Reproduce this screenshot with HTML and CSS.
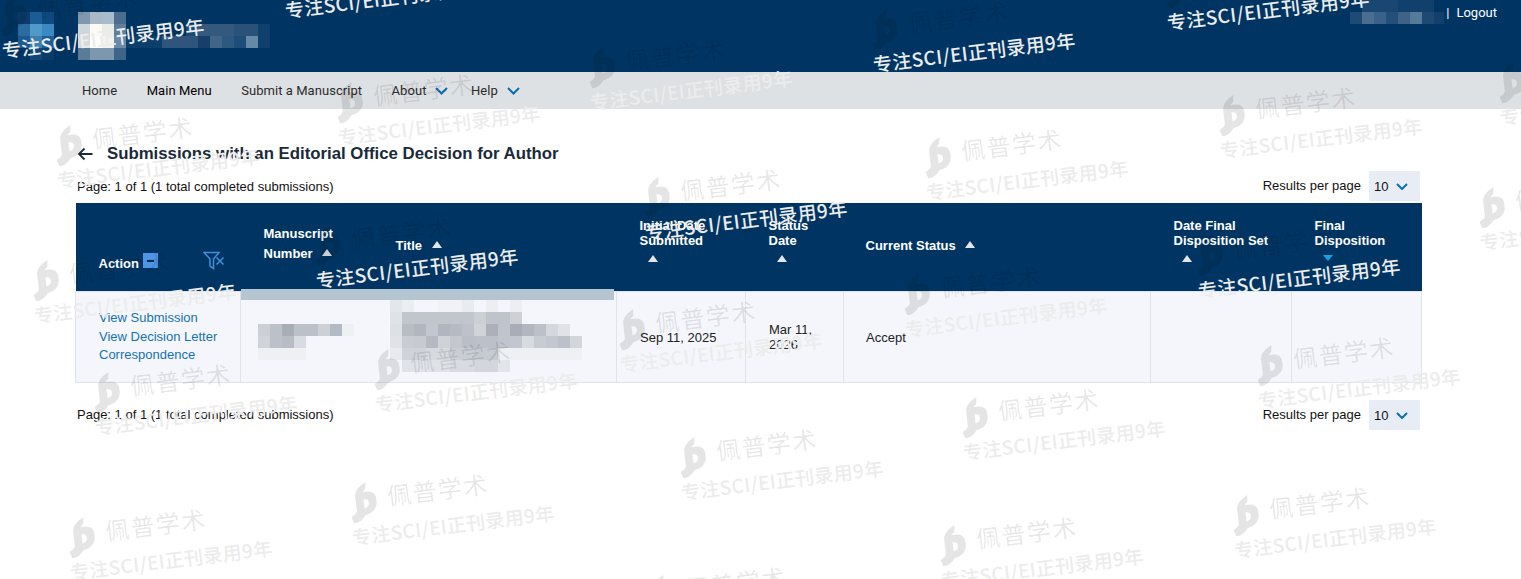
FILE: index.html
```html
<!DOCTYPE html>
<html lang="en">
<head>
  <meta charset="UTF-8" />
  <title>Submissions with an Editorial Office Decision for Author</title>
  <link rel="stylesheet" href="styles.css">
</head>

<body>
  <!-- ===================  TOP BAR  =================== -->
  <header class="topbar">
    <svg class="mosaic mosaic-logo" width="280" height="60">
      <rect x="18" y="12" width="12" height="12" fill="#0a3d6c"/><rect x="30" y="12" width="12" height="12" fill="#1b5c96"/><rect x="42" y="12" width="12" height="12" fill="#0d4a80"/>
      <rect x="18" y="24" width="12" height="12" fill="#2a6ca1"/><rect x="30" y="24" width="12" height="12" fill="#5099c9"/><rect x="42" y="24" width="12" height="12" fill="#3a89c0"/>
      <rect x="18" y="36" width="12" height="12" fill="#1d5a8f"/><rect x="30" y="36" width="12" height="12" fill="#3f7fb0"/><rect x="42" y="36" width="12" height="12" fill="#1c5f96"/>
      <rect x="30" y="48" width="12" height="12" fill="#0f4778"/><rect x="42" y="48" width="12" height="12" fill="#0a3c6a"/>
      <rect x="78" y="12" width="12" height="12" fill="#7f98ae"/><rect x="90" y="12" width="12" height="12" fill="#a9b9c5"/><rect x="102" y="12" width="12" height="12" fill="#a9bccd"/><rect x="114" y="12" width="12" height="12" fill="#4b6e8f"/>
      <rect x="78" y="24" width="12" height="12" fill="#cdd6dc"/><rect x="90" y="24" width="12" height="12" fill="#fbfbf5"/><rect x="102" y="24" width="12" height="12" fill="#e8ede8"/><rect x="114" y="24" width="12" height="12" fill="#5d7f9a"/>
      <rect x="78" y="36" width="12" height="12" fill="#d4dade"/><rect x="90" y="36" width="12" height="12" fill="#fdfdfb"/><rect x="102" y="36" width="12" height="12" fill="#f3f3f0"/><rect x="114" y="36" width="12" height="12" fill="#6a8aa5"/>
      <rect x="78" y="48" width="12" height="12" fill="#5a7c99"/><rect x="90" y="48" width="12" height="12" fill="#7c97ae"/><rect x="102" y="48" width="12" height="12" fill="#7c97ae"/><rect x="114" y="48" width="12" height="12" fill="#3e6487"/>
      <rect x="186" y="24" width="12" height="12" fill="#1d4a75"/><rect x="198" y="24" width="36" height="12" fill="#34597d"/><rect x="234" y="24" width="24" height="12" fill="#2a5278"/><rect x="258" y="24" width="12" height="12" fill="#0f406e"/>
      <rect x="126" y="36" width="36" height="12" fill="#0d3f6c"/><rect x="162" y="36" width="36" height="12" fill="#2f557c"/><rect x="198" y="36" width="12" height="12" fill="#173f6a"/><rect x="210" y="36" width="12" height="12" fill="#406586"/><rect x="222" y="36" width="12" height="12" fill="#2d587f"/><rect x="234" y="36" width="12" height="12" fill="#1d4d78"/><rect x="246" y="36" width="12" height="12" fill="#658aa6"/><rect x="258" y="36" width="12" height="12" fill="#0f406e"/>
    </svg>
    <div class="account">
      <svg class="mosaic mosaic-user" width="94" height="24">
        <rect x="12" y="0" width="36" height="12" fill="#1a4672"/><rect x="48" y="0" width="36" height="12" fill="#12406c"/>
        <rect x="0" y="12" width="12" height="12" fill="#1e4a75"/><rect x="12" y="12" width="12" height="12" fill="#4a6d90"/><rect x="24" y="12" width="12" height="12" fill="#3a618a"/><rect x="36" y="12" width="12" height="12" fill="#234f7b"/><rect x="48" y="12" width="12" height="12" fill="#406385"/><rect x="60" y="12" width="12" height="12" fill="#557a9a"/><rect x="72" y="12" width="12" height="12" fill="#1d4972"/><rect x="84" y="12" width="10" height="12" fill="#123f6c"/>
      </svg>
      <span class="account-sep">|</span>
      <a href="#">Logout</a>
    </div>
  </header>

  <nav class="mainnav">
    <a href="#">Home</a>
    <a href="#" class="current">Main Menu</a>
    <a href="#">Submit a Manuscript</a>
    <a href="#" class="has-menu">About
      <svg class="chev" width="13" height="8" viewBox="0 0 13 8"><path d="M1 1l5.5 5.5L12 1"/></svg></a>
    <a href="#" class="has-menu">Help
      <svg class="chev" width="13" height="8" viewBox="0 0 13 8"><path d="M1 1l5.5 5.5L12 1"/></svg></a>
  </nav>

  <!-- ===================  SUBMISSIONS  =================== -->
  <main>
    <h1 class="page-title">
      <svg class="back" width="16" height="14" viewBox="0 0 16 14"><path d="M15.5 7H2M7.5 1.5L2 7l5.5 5.5"/></svg>
      Submissions with an Editorial Office Decision for Author
    </h1>

    <div class="pager pager-top">
      <span>Page: 1 of 1 (1 total completed submissions)</span>
      <div class="per-page">
        <span>Results per page</span>
        <div class="per-select">10
          <svg class="chev" width="12" height="7" viewBox="0 0 12 7"><path d="M1 1l5 5 5-5"/></svg></div>
      </div>
    </div>

    <div class="table-wrap">
      <table class="subs">
        <colgroup>
          <col class="c-action"><col class="c-num"><col class="c-title"><col class="c-init">
          <col class="c-stat"><col class="c-cur"><col class="c-dfin"><col class="c-fin">
        </colgroup>
        <thead>
          <tr>
            <th class="th-action">
              <div class="action-head">
                <span>Action</span>
                <span class="collapse-box"></span>
                <svg class="filter-x" width="22" height="19" viewBox="0 0 22 19"><path d="M1 1.5h15l-5.5 6.5v9.5l-3.5-2.5V8z"/><path d="M13.5 6.5l7 7M20.5 6.5l-7 7"/></svg>
              </div>
            </th>
            <th class="th-tall">Manuscript<br>Number <i class="sort"></i></th>
            <th class="th-title">Title <i class="sort"></i></th>
            <th class="th-stack">Initial Date<br>Submitted<br><i class="sort sort-below"></i></th>
            <th class="th-stack">Status<br>Date<br><i class="sort sort-below"></i></th>
            <th class="th-cur">Current Status <i class="sort"></i></th>
            <th class="th-stack">Date Final<br>Disposition Set<br><i class="sort sort-below"></i></th>
            <th class="th-stack">Final<br>Disposition<br><i class="sort sort-below sort-active"></i></th>
          </tr>
        </thead>
        <tbody>
          <tr>
            <td class="td-links">
              <a href="#">View Submission</a>
              <a href="#">View Decision Letter</a>
              <a href="#">Correspondence</a>
            </td>
            <td colspan="2" class="td-hidden"></td>
            <td>Sep 11, 2025</td>
            <td>Mar 11, 2026</td>
            <td class="td-cur">Accept</td>
            <td></td>
            <td></td>
          </tr>
        </tbody>
      </table>

      <!-- redacted cells -->
      <svg class="mosaic mosaic-row" width="376" height="84">
        <rect x="0" y="0" width="373" height="11" fill="#b5c4d1"/>
        <g transform="translate(17,35)">
          <rect x="0" y="0" width="12" height="12" fill="#ccd0d5"/><rect x="12" y="0" width="12" height="12" fill="#bcc1c9"/><rect x="24" y="0" width="12" height="12" fill="#a8aeb6"/><rect x="36" y="0" width="24" height="12" fill="#bbc0c9"/><rect x="60" y="0" width="12" height="12" fill="#cdd1d5"/><rect x="72" y="0" width="12" height="12" fill="#b3bac3"/><rect x="84" y="0" width="12" height="12" fill="#eef1f4"/>
          <rect x="0" y="12" width="12" height="12" fill="#d0d4d9"/><rect x="12" y="12" width="12" height="12" fill="#bcc0c8"/><rect x="24" y="12" width="12" height="12" fill="#b8bcc4"/><rect x="36" y="12" width="12" height="12" fill="#d8dbe1"/>
          <rect x="0" y="24" width="48" height="12" fill="#eef0f4"/>
        </g>
        <g transform="translate(149,11)">
          <rect x="0" y="0" width="12" height="12" fill="#e4e7ea"/><rect x="12" y="0" width="12" height="12" fill="#ebeef0"/><rect x="48" y="0" width="24" height="12" fill="#f0f2f6"/><rect x="72" y="0" width="12" height="12" fill="#e8ecee"/><rect x="96" y="0" width="12" height="12" fill="#eceef2"/><rect x="120" y="0" width="12" height="12" fill="#eceef2"/>
          <rect x="0" y="12" width="12" height="12" fill="#dfe2e6"/><rect x="12" y="12" width="72" height="12" fill="#c1c5cc"/><rect x="84" y="12" width="12" height="12" fill="#cbd0d5"/><rect x="96" y="12" width="24" height="12" fill="#bfc3cb"/><rect x="120" y="12" width="12" height="12" fill="#cdd0d5"/>
          <rect x="0" y="24" width="12" height="12" fill="#dde0e5"/><rect x="12" y="24" width="12" height="12" fill="#b8bdc5"/><rect x="24" y="24" width="12" height="12" fill="#b1b6bf"/><rect x="36" y="24" width="12" height="12" fill="#c2c6cf"/><rect x="48" y="24" width="12" height="12" fill="#b0b5bf"/><rect x="60" y="24" width="12" height="12" fill="#b5bac3"/><rect x="72" y="24" width="12" height="12" fill="#bdc2ca"/><rect x="84" y="24" width="12" height="12" fill="#d0d4d9"/><rect x="96" y="24" width="12" height="12" fill="#abb0b9"/><rect x="108" y="24" width="12" height="12" fill="#c0c4cd"/><rect x="120" y="24" width="12" height="12" fill="#a8adb7"/><rect x="132" y="24" width="12" height="12" fill="#b1b6bf"/><rect x="144" y="24" width="12" height="12" fill="#bcc0c9"/><rect x="156" y="24" width="12" height="12" fill="#d4d7dc"/><rect x="168" y="24" width="12" height="12" fill="#dfe2e7"/>
          <rect x="0" y="36" width="12" height="12" fill="#dfe2e6"/><rect x="12" y="36" width="12" height="12" fill="#c8ccd3"/><rect x="24" y="36" width="12" height="12" fill="#c6cad1"/><rect x="36" y="36" width="12" height="12" fill="#b5bac2"/><rect x="48" y="36" width="12" height="12" fill="#cfd3d8"/><rect x="60" y="36" width="12" height="12" fill="#c3c7cf"/><rect x="72" y="36" width="12" height="12" fill="#b9bec7"/><rect x="84" y="36" width="24" height="12" fill="#bcc1c9"/><rect x="108" y="36" width="12" height="12" fill="#c0c4cd"/><rect x="120" y="36" width="12" height="12" fill="#c2c6ce"/><rect x="132" y="36" width="12" height="12" fill="#d8dbe0"/><rect x="144" y="36" width="12" height="12" fill="#c7cbd2"/><rect x="156" y="36" width="12" height="12" fill="#c3c7cf"/><rect x="168" y="36" width="12" height="12" fill="#bcc0c8"/><rect x="180" y="36" width="12" height="12" fill="#d2d5da"/>
          <rect x="0" y="48" width="12" height="12" fill="#e8eaee"/><rect x="12" y="48" width="24" height="12" fill="#cfd2d8"/><rect x="36" y="48" width="24" height="12" fill="#d6d9de"/><rect x="60" y="48" width="24" height="12" fill="#c9cdd4"/><rect x="84" y="48" width="24" height="12" fill="#c6cad2"/><rect x="108" y="48" width="84" height="12" fill="#eef0f4"/>
          <rect x="12" y="60" width="48" height="12" fill="#dfe2e8"/><rect x="60" y="60" width="24" height="12" fill="#d8dbe1"/><rect x="84" y="60" width="24" height="12" fill="#d3d6dd"/><rect x="108" y="60" width="12" height="12" fill="#e2e5ea"/>
        </g>
      </svg>
    </div>

    <div class="pager pager-bottom">
      <span>Page: 1 of 1 (1 total completed submissions)</span>
      <div class="per-page">
        <span>Results per page</span>
        <div class="per-select">10
          <svg class="chev" width="12" height="7" viewBox="0 0 12 7"><path d="M1 1l5 5 5-5"/></svg></div>
      </div>
    </div>
  </main>

  <!-- ===================  WATERMARK  =================== -->
  <div class="wm-layer" id="wmLayer"></div>
  <template id="wmTile">
    <div class="wm">
      <div class="wm-brand">
        <svg class="wm-logo" width="27" height="40" viewBox="0 0 27 40"><path fill-rule="evenodd" d="M2 40L0 33Q5 31 6 28V15Q5 6 18 0L17 7Q14 9 14 10Q27 8 27 19Q27 31 14 33Q10 39 2 40ZM14 17V26Q19 25 19 21Q19 17 14 17Z"/></svg>
        <span>佩普学术</span>
      </div>
      <div class="wm-tag">专注SCI/EI正刊录用9年</div>
    </div>
  </template>

  <script src="watermark.js"></script>
</body>
</html>
```

FILE: styles.css
```css
*{box-sizing:border-box;}

body{
  margin:0;
  height:579px;
  overflow:hidden;
  position:relative;
  background:#fff;
  font-family:"Liberation Sans",Arial,sans-serif;
  font-size:13px;
  color:#111;
}
a{text-decoration:none;color:inherit;}

/* ---- top bar ---- */
.topbar{
  height:72px;
  background:#003563;
  display:flex;
  justify-content:space-between;
  align-items:flex-start;
}
.mosaic{display:block;}
.account{
  display:flex;
  align-items:flex-start;
  margin-right:24px;
  color:#fff;
  font-family:Roboto,sans-serif;
  font-size:13px;
  line-height:26px;
}
.account-sep{margin:0 7px 0 2px;}

/* ---- nav ---- */
.mainnav{
  height:37px;
  background:#dee1e4;
  display:flex;
  align-items:center;
  gap:29.5px;
  padding-left:82px;
  font-family:Roboto,sans-serif;
  font-size:13px;
  letter-spacing:.05px;
  color:#2b2b2b;
}
.mainnav .current{color:#000;}
.has-menu{display:flex;align-items:center;gap:9px;margin-right:-7px;}
.chev{fill:none;stroke:#0a6fb0;stroke-width:2;}

/* ---- content ---- */
main{padding:0 100px 0 75px;}
.page-title{
  display:flex;
  align-items:center;
  gap:14px;
  margin:36px 0 0 2px;
  height:18px;
  font-size:16.8px;
  line-height:18px;
  color:#1a2a3a;
}
.back{fill:none;stroke:#1a2a3a;stroke-width:1.8;}

.pager{
  display:flex;
  justify-content:space-between;
  align-items:center;
  padding:0 1px 0 2px;
  height:30px;
}
.pager-top{margin-top:8px;}
.pager-bottom{margin-top:17px;}
.pager-bottom > span{margin-bottom:2px;}
.per-page{display:flex;align-items:center;gap:8px;}
.per-page > span{margin-bottom:2px;}
.per-select{
  width:51px;
  height:30px;
  background:#e8edf5;
  display:flex;
  align-items:center;
  justify-content:space-between;
  padding:0 12px 0 5px;
}

/* ---- table ---- */
.table-wrap{position:relative;margin-top:2px;width:1346px;}
.subs{
  width:1346px;
  height:180px;
  table-layout:fixed;
  border-collapse:collapse;
}
.c-action{width:165px;}
.c-num{width:132px;}
.c-title{width:244px;}
.c-init{width:129px;}
.c-stat{width:98px;}
.c-cur{width:307px;}
.c-dfin{width:141px;}
.c-fin{width:130px;}

.subs thead tr{height:88px;background:#003563;}
.subs th{
  padding:0 4px 0 23px;
  text-align:left;
  font-size:13px;
  line-height:15px;
  color:#fff;
  vertical-align:middle;
}
.subs th.th-title{padding-bottom:2px;}
.subs th.th-stack{padding-bottom:12px;}
.subs th.th-tall{line-height:20px;padding-bottom:6px;}
.subs th.th-cur{padding:0 4px 2px 22px;}
.subs th.th-action{vertical-align:bottom;padding-bottom:20px;}
.action-head{display:flex;align-items:center;}
.collapse-box{
  position:relative;
  width:15px;
  height:15px;
  margin:-5px 0 0 4px;
  background:#4d95e8;
}
.collapse-box::after{
  content:"";
  position:absolute;
  left:4px;top:7px;
  width:7px;height:2px;
  background:#0a2c50;
}
.filter-x{
  margin:-6px 0 0 45px;
  fill:none;
  stroke:#3f8fd8;
  stroke-width:1.5;
}
.sort{
  display:inline-block;
  width:0;height:0;
  margin-left:6px;
  vertical-align:2px;
  border-left:5.5px solid transparent;
  border-right:5.5px solid transparent;
  border-bottom:7px solid #e2e6ea;
}
.sort-below{margin:7px 0 0 8px;vertical-align:top;}
.sort-active{border-bottom:0;border-top:6px solid #12a5e2;}

.subs tbody tr{background:#f4f6fb;}
.subs td{
  border:1px solid #dfe3ea;
  padding:1px 8px 0 23px;
  line-height:15px;
  color:#222;
  vertical-align:middle;
}
.subs td.td-links{padding-top:0;}
.subs td.td-cur{padding-left:22px;}
.td-links a{display:block;color:#1472b0;line-height:18.5px;}

.mosaic-row{position:absolute;left:166px;top:86px;}

/* ---- watermark ---- */
.wm-layer{
  position:absolute;
  inset:0;
  overflow:hidden;
  pointer-events:none;
}
.wm{
  position:absolute;
  width:230px;
  transform-origin:0 56px;
  transform:rotate(-7deg);
  font-family:"Noto Sans CJK SC",sans-serif;
}
.wm-brand{
  display:flex;
  align-items:center;
  gap:11px;
  height:36px;
  margin-bottom:7px;
  font-size:24px;
  letter-spacing:1.5px;
  color:rgba(0,0,0,.1);
}
.wm-logo{fill:rgba(0,0,0,.1);flex:none;margin:10px 0 0 2px;}
.wm-tag{
  height:26px;
  line-height:26px;
  font-size:19px;
  font-weight:500;
  letter-spacing:.4px;
  white-space:nowrap;
  color:#ececec;
}
```

FILE: watermark.js
```js
/* Where each watermark sits: left end of its tagline, x then y */
const tiles = [
  [2,50],[285,10],[873,64],[1167,22],
  [590,102],[1500,117],
  [57,180],[338,137],[926,192],[1220,150],
  [645,232],[1480,242],
  [34,315],[316,280],[905,329],[1198,290],
  [620,364],[375,404],[1258,400],
  [95,427],[963,452],[681,492],
  [352,537],[1234,550],[70,572],[941,580],[650,630]
];

const layer = document.getElementById('wmLayer');
const tpl   = document.getElementById('wmTile');

tiles.forEach(([x,y])=>{
  const el = tpl.content.firstElementChild.cloneNode(true);
  el.style.left = x + 'px';
  el.style.top  = (y - 56) + 'px';
  layer.appendChild(el);
});
```
